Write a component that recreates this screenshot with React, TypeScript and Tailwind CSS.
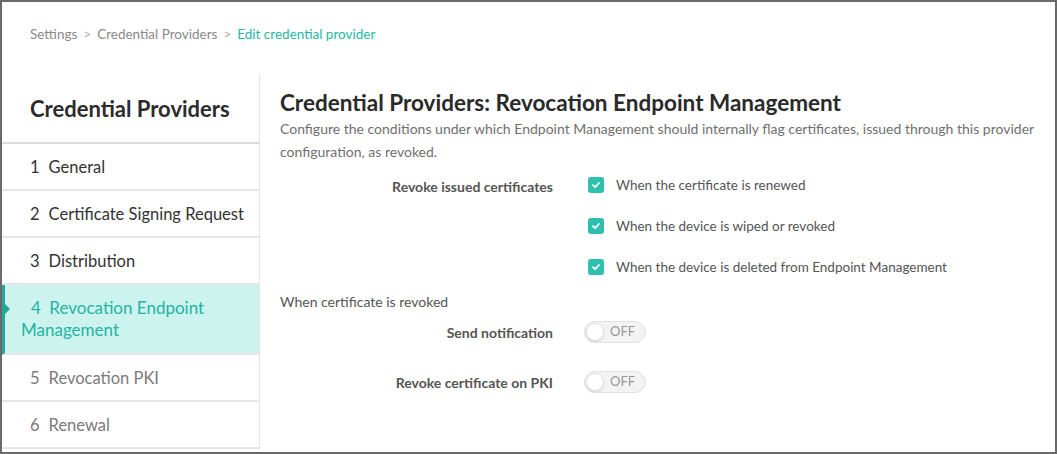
const font = { fontFamily: 'Lato, "Noto Sans", sans-serif' };

const steps = [
  { n: 1, label: "General", tone: "done" },
  { n: 2, label: "Certificate Signing Request", tone: "done" },
  { n: 3, label: "Distribution", tone: "done" },
  { n: 4, label: "Revocation Endpoint Management", tone: "active" },
  { n: 5, label: "Revocation PKI", tone: "todo" },
  { n: 6, label: "Renewal", tone: "todo" },
];

function Check() {
  return (
    <span className="flex h-[16px] w-[16px] shrink-0 items-center justify-center rounded-[3px] bg-[#2fbfae]">
      <svg width="10" height="10" viewBox="0 0 10 10" fill="none">
        <path d="M2 5.2 4.1 7.2 8 3" stroke="white" strokeWidth="1.8" strokeLinecap="round" strokeLinejoin="round" />
      </svg>
    </span>
  );
}

function Toggle() {
  return (
    <div className="relative flex h-[22px] w-[62px] items-center rounded-full border border-[#e2e2e2] bg-[#f3f3f3]">
      <span className="absolute left-[1px] top-[1px] h-[18px] w-[18px] rounded-full border border-[#e6e6e6] bg-white shadow-sm" />
      <span className="ml-[25px] text-[13px] text-[#999]">OFF</span>
    </div>
  );
}

export default function App() {
  return (
    <div className="h-[454px] w-[1057px] overflow-hidden border-2 border-[#6a6a6a] bg-white" style={font}>
      {/* Breadcrumb */}
      <div className="flex h-[72px] items-start pl-[28px] pt-[22px] text-[13.5px] text-[#8a8a8a]">
        <span>Settings</span>
        <span className="mx-[6px] text-[#aaa]">&gt;</span>
        <span>Credential Providers</span>
        <span className="mx-[6px] text-[#aaa]">&gt;</span>
        <span className="text-[#27b7a6]">Edit credential provider</span>
      </div>

      <div className="flex">
        {/* Sidebar */}
        <aside className="w-[258px] shrink-0 border-r border-[#e4e4e4]">
          <div className="flex h-[70px] items-center border-b-2 border-[#dcdcdc] pl-[28px] text-[22px] font-bold text-[#2c2c2c]">
            Credential Providers
          </div>
          {steps.map((s) =>
            s.tone === "active" ? (
              <div
                key={s.n}
                className="relative border-b-2 border-l-[3px] border-b-[#e6e6e6] border-l-[#22a897] bg-[#cdf3ee] py-[12px] pl-[16px] pr-[10px] text-[17px] leading-[22px] text-[#22b3a2]"
              >
                <span className="absolute left-0 top-[19px] h-0 w-0 border-y-[5px] border-l-[5px] border-y-transparent border-l-[#22a897]" />
                <span className="pl-[10px]">{`${s.n}\u2002${s.label}`}</span>
              </div>
            ) : (
              <div
                key={s.n}
                className={
                  "flex h-[47px] items-center border-b-2 border-[#e6e6e6] pl-[28px] pt-[1px] text-[16.5px] " +
                  (s.tone === "done" ? "text-[#333]" : "text-[#7a7a7a]")
                }
              >
                <span className="mr-[9px]">{s.n}</span>
                {s.label}
              </div>
            )
          )}
        </aside>

        {/* Main */}
        <main className="flex-1 pl-[20px] pr-[8px] pt-[15px]">
          <h1 className="text-[22.5px] font-bold leading-[28px] text-[#2a2a2a]">
            Credential Providers: Revocation Endpoint Management
          </h1>
          <p className="text-[14px] leading-[23px] text-[#707070]">
            Configure the conditions under which Endpoint Management should internally flag certificates, issued through this provider configuration, as revoked.
          </p>

          <div className="mt-[12px] flex">
            <div className="w-[273px] pt-[1px] text-right text-[14px] font-bold text-[#555]">Revoke issued certificates</div>
            <div className="ml-[35px] flex flex-col gap-[21px]">
              {[
                "When the certificate is renewed",
                "When the device is wiped or revoked",
                "When the device is deleted from Endpoint Management",
              ].map((t) => (
                <label key={t} className="flex h-[20px] items-center gap-[12px] text-[13.5px] text-[#555]">
                  <Check />
                  {t}
                </label>
              ))}
            </div>
          </div>

          <div className="mt-[14px] text-[14px] text-[#555]">When certificate is revoked</div>

          <div className="mt-[9px] flex items-center">
            <div className="w-[273px] text-right text-[14px] font-bold text-[#555]">Send notification</div>
            <div className="ml-[31px]">
              <Toggle />
            </div>
          </div>
          <div className="mt-[28px] flex items-center">
            <div className="w-[273px] text-right text-[14px] font-bold text-[#555]">Revoke certificate on PKI</div>
            <div className="ml-[31px]">
              <Toggle />
            </div>
          </div>
        </main>
      </div>
    </div>
  );
}
